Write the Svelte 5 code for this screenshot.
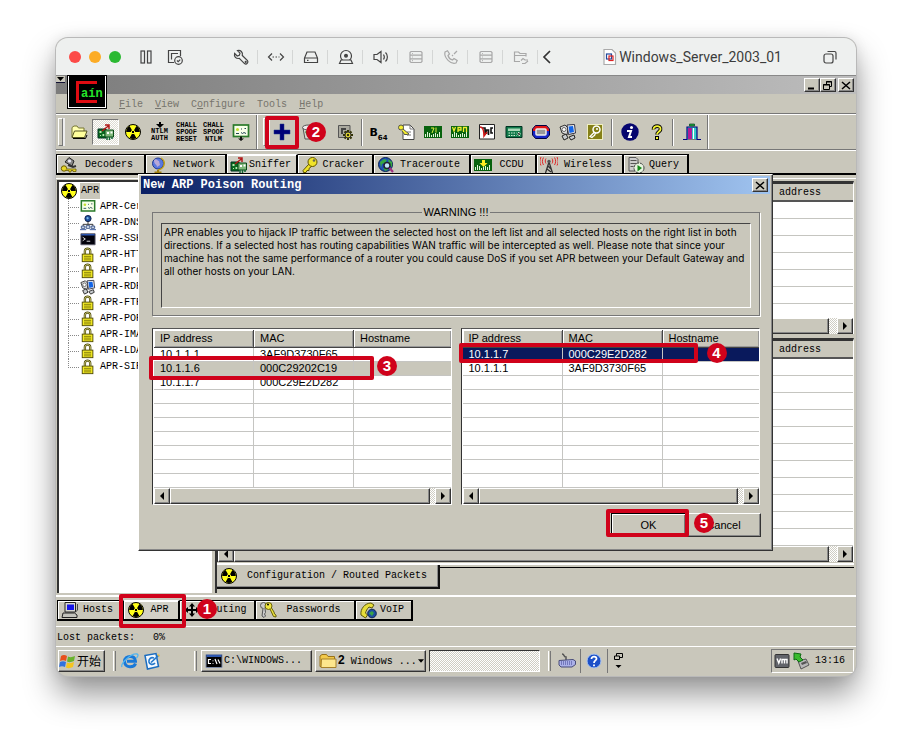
<script>
  const toolsLeft = ['folder', 'sniffer', 'nuke', 'ntlm', 'chall', 'challntlm', 'cert'];
  const toolsRight = ['b64', 'keydoc', 'hash', 'vpn', 'nc', 'calc', 'router', 'rdp', 'olive'];
  const tabs = [
    ['Decoders', 'decoder', 90],
    ['Network', 'globe', 81],
    ['Sniffer', 'sniffer', 71],
    ['Cracker', 'key', 76],
    ['Traceroute', 'earth', 97],
    ['CCDU', 'ccdu', 66],
    ['Wireless', 'wireless', 87],
    ['Query', 'query', 65]
  ];
  const tree = [
    ['APR-Cert', 'certs'], ['APR-DNS', 'dns'], ['APR-SSH-1', 'term'], ['APR-HTTPS', 'lock'],
    ['APR-Proxy', 'lock'], ['APR-RDP', 'rdp'], ['APR-FTPS', 'lock'], ['APR-POP3S', 'lock'],
    ['APR-IMAPS', 'lock'], ['APR-LDAPS', 'lock'], ['APR-SIPS', 'lock']
  ];
  const lists = [
    { id: 'left', selected: 1, rows: [['10.1.1.1', '3AF9D3730F65'], ['10.1.1.6', '000C29202C19'], ['10.1.1.7', '000C29E2D282']] },
    { id: 'right', selected: 0, rows: [['10.1.1.7', '000C29E2D282'], ['10.1.1.1', '3AF9D3730F65']] }
  ];
  const macTools = ['wrench', 'net', 'disk', 'cam', 'speaker', 'drive', 'phone', 'drive', 'share'];
</script>

{#snippet mac(name)}
  <svg width="18" height="18" viewBox="0 0 18 18" fill="none" stroke="currentColor" stroke-width="1.2">
    {#if name === 'pause'}<rect x="4" y="3" width="3.5" height="12" /><rect x="10.5" y="3" width="3.5" height="12" />
    {:else if name === 'snap'}<path d="M8 14.500H2.500V2.500H14.500V8M5.500 11.500V5.500H12" /><circle cx="12.500" cy="12.500" r="3.800" /><path d="M11 12.500l1.200 1.200 2-2" />
    {:else if name === 'wrench'}<path d="M5.500 2.600 8 5.200 7.300 7.300 5.200 8 2.600 5.500C1.800 8.500 4 11 7.300 10.400L12.500 15.600C14.500 17 16.800 14.600 15.500 12.700L10.300 7.500C11.200 4.200 8.500 1.800 5.500 2.600Z" /><circle cx="13.700" cy="13.900" r=".5" />
    {:else if name === 'net'}<path d="M5 5.500 1.500 9 5 12.500M13 5.500 16.500 9 13 12.500" /><path d="M5.500 9h7" stroke-dasharray="1.500 1.500" />
    {:else if name === 'disk'}<path d="M5 4H13L15.500 10V14.500H2.500V10ZM2.500 10H15.500M5 12.400h1.500" />
    {:else if name === 'cam'}<circle cx="9" cy="8" r="5.500" /><circle cx="9" cy="7.800" r="1.400" fill="currentColor" /><path d="M4 12H14L15.500 15.500H2.500Z" fill="#eef0ef" />
    {:else if name === 'speaker'}<path d="M2 6.500H5L9 3.500V14.500L5 11.500H2ZM11.500 6.500C12.500 8 12.500 10 11.500 11.500M13.500 4.500C16 7 16 11 13.500 13.500" />
    {:else if name === 'drive'}<path d="M4 3.500H14L15 4.500V13.500L14 14.500H4L3 13.500V4.500ZM3 7.200H15M3 10.900H15M5 5.500h.8M5 9h.8M5 12.700h.8" />
    {:else if name === 'phone'}<path d="M3 4 5.500 2.800 7.500 6 6 7.500C6.500 9.500 8.500 11.500 10.500 12L12 10.500 15.200 12.500 14 15C9 17 1.500 9.500 3 4ZM10 8l1-1M12 6l3-3" />
    {:else if name === 'share'}<path d="M8 13.500H2.500V4H6.500L8 5.500H14V8.500M2.500 7.500H14M9 12.500l2-2 2 1.500h3M10 15.500h3l3-2.500" />
    {:else if name === 'back'}<path d="M12 3 6 9 12 15" stroke-width="1.700" />
    {:else if name === 'windows'}<rect x="3" y="6" width="9" height="9" rx="2" /><path d="M6.500 3.500H13.500Q15 3.500 15 5V11.500" />
    {:else}<path d="M3 1.500H11L14.500 5V16.500H3Z" fill="#fff" stroke="#aaa" /><rect x="5.500" y="6" width="5" height="5" stroke="#22479a" /><rect x="8" y="8" width="4" height="4.500" stroke="#d22" />{/if}
  </svg>
{/snippet}

{#snippet nuke()}
  <circle cx="9" cy="9" r="7.500" fill="#ffff1a" stroke="#000" />
  <path d="M9 9H2.200A6.800 6.800 0 0 1 5.600 3.100ZM9 9 12.400 3.100A6.800 6.800 0 0 1 15.800 9ZM9 9 12.400 14.900A6.800 6.800 0 0 1 5.600 14.900Z" fill="#000" />
  <circle cx="9" cy="9" r="1.700" fill="#000" stroke="#ffff1a" />
{/snippet}

{#snippet icon(name)}
  {#if name === 'ntlm'}
    <span class="tiny"><svg width="8" height="6" viewBox="0 0 8 6"><path d="M3 0H5V2H8L4 6 0 2H3Z" /></svg>NTLM<br />AUTH</span>
  {:else if name === 'chall'}<span class="tiny">CHALL<br />SPOOF<br />RESET</span>
  {:else if name === 'challntlm'}<span class="tiny">CHALL<br />SPOOF<br />NTLM</span>
  {:else if name === 'b64'}<span class="b64"><b>B</b><small>64</small></span>
  {:else}
    <svg class="ico" width="18" height="18" viewBox="0 0 18 18">
      {#if name === 'folder'}<path d="M2 14V4.500L4 3H7L8.500 5H14V8" fill="#ffffb0" stroke="#777733" /><path d="M4.500 8H17L14.500 14.500H2Z" fill="#ffff9c" stroke="#555522" /><path d="M3 15.500H15.500L17 12" fill="none" stroke="#000" />
      {:else if name === 'sniffer'}<path d="M1 6H9V15H1Z" fill="#0b6b20" stroke="#032" /><path d="M2.500 8h2v2h-2zM5.500 11h2v2h-2zM3 12h1v1H3z" fill="#b8e8b0" /><path d="M8 7H16.500V14H8Z" fill="#7fb87a" stroke="#0a4a18" /><path d="M10 9h2v2h-2zM13.500 8.500h2v2h-2z" fill="#fff" /><path d="M10 14v3M12.500 14v3M15 14v2" stroke="#163" stroke-width="1.500" /><path d="M5 8 12 2.500M12 6V2H8" stroke="#b01818" stroke-width="1.500" fill="none" />
      {:else if name === 'nuke'}{@render nuke()}
      {:else if name === 'cert' || name === 'certs'}<rect x="1.500" y="2" width="15" height="11.500" fill="#f7ffe8" stroke="#2a7a2a" stroke-width="1.700" /><path d="M4 10.500h3M9 9.500l1.500 1 1.500-1 2 1M9 6h1M12.500 5.500h1.500" stroke="#245" fill="none" /><circle cx="5.500" cy="6.500" r="1.500" fill="#c4dd30" />{#if name === 'cert'}<path d="M8 13.500h2v2h2l-3 2.500-3-2.500h2z" fill="#111" />{/if}
      {:else if name === 'plus'}<path d="M7 1h4v6h6v4h-6v6H7v-6H1V7h6z" fill="#000078" stroke="#223a88" stroke-width=".5" />
      {:else if name === 'trash'}<path d="M3 5H14L12.500 16H5Z" fill="#d8d8d0" stroke="#555" /><ellipse cx="8.500" cy="4.500" rx="6" ry="2.500" fill="#eee" stroke="#555" /><path d="M6 9l3-2 2 3-3 3z" fill="none" stroke="#208020" stroke-width="1.500" />
      {:else if name === 'config'}<path d="M2.500 2.500H14V14.500H2.500Z" fill="#aaa99f" stroke="#555" /><path d="M5 5h5v2H7v4H5zM9 8h2v3H9z" fill="#444" /><path d="M12 7v10M7 12h10M8.500 8.500l7 7M15.500 8.500l-7 7" stroke="#303000" stroke-width="2" /><circle cx="12" cy="12" r="3" fill="#d8cd30" stroke="#333" /><circle cx="12" cy="12" r="1" />
      {:else if name === 'keydoc'}<path d="M6 2H13L17 6V16.500H6Z" fill="#fff" stroke="#444" /><path d="M13 2V6H17M10 9h4M10 12h4" fill="none" stroke="#777" /><circle cx="4" cy="4.500" r="2.500" fill="#f5ee30" stroke="#554" /><path d="m6 6 6 5-2 1-1-1-1 1-3-4" fill="#f5ee30" stroke="#554" />
      {:else if name === 'hash' || name === 'vpn' || name === 'ccdu'}<path d="M0 3H18V15H0Z" fill="#08620e" /><path d="M1.500 14v-3M3.500 14v-5M5.500 14v-4M7.500 14v-2M9.500 14v-3M11.500 14v-4M13.500 14v-3M15.500 14v-5" stroke="#dff5d8" />
        {#if name === 'hash'}<path d="M7 5h3l-2 5M12 4.500v5" fill="none" stroke="#dcef40" />{:else if name === 'vpn'}<path d="M1.500 4l1.500 4 1.500-4M7 9V4.500h3v2.500H7M12.500 9V4.500h3V9" fill="none" stroke="#f0f030" stroke-width="1.300" />{:else}<path d="M8 4h3v3h2.500L9.500 11 5.500 7H8z" fill="#ffee20" />{/if}
      {:else if name === 'nc'}<path d="M1.500 1.500H16.500V16H1.500Z" fill="#fff" stroke="#222" /><path d="M4 5h3v7M8.500 11V7h2v5M15 5h-2v5h2" stroke="#111" stroke-width="1.600" fill="none" /><path d="M2 4c3 0 4 4 4 9l3-4" stroke="#d01818" fill="none" stroke-width="1.500" />
      {:else if name === 'calc'}<path d="M1 3.500H17V14.500H1Z" fill="#117a4a" stroke="#032" /><path d="M3 5.500H15V8H3Z" fill="#a9d8b8" /><path d="M3.500 10h8M3.500 12.500h8M13 9.500h2v3h-2z" stroke="#d4ecd6" stroke-dasharray="1.500 1" />
      {:else if name === 'router'}<path d="M3.500 2.500H14.500L17.500 6V12L14.500 15.500H3.500L.500 12V6Z" fill="#1626c8" stroke="#000040" /><path d="M3.500 3H14.500L17 6V8H1V6Z" fill="#e01515" /><rect x="4" y="6" width="10" height="6" rx="1" fill="#999" stroke="#eee" stroke-width="1.500" />
      {:else if name === 'rdp'}<path d="M1 4 6 2 9 5 8 12 3 10Z" fill="#ddd" stroke="#333" /><path d="M8 2 15.500 1.500 16.500 10 9.500 11.500Z" fill="#efefef" stroke="#334" /><path d="M9.500 3.500 14 3 15 9 10.500 10Z" fill="#1265e8" /><path d="M3 13l4-2 2 4-4 2zM10 14l5-2 1 3-4 2z" fill="#c8ccd0" stroke="#222" /><circle cx="5" cy="6.500" r="2" fill="#fff" stroke="#666" />
      {:else if name === 'olive'}<rect x="1.500" y="1.500" width="15" height="15" fill="#858017" stroke="#eeeec0" /><circle cx="10.500" cy="6.500" r="3.500" fill="#858017" stroke="#fff" stroke-width="1.500" /><path d="M8.500 9 4 13.500l2 1 1.500-1.500 1-.500L9.500 10" fill="none" stroke="#fff" stroke-width="1.300" /><circle cx="11" cy="6" r="1" fill="#fff" />
      {:else if name === 'info'}<circle cx="9" cy="9" r="8.700" fill="#05056f" /><path d="M6 8h4l-2 6h3" fill="none" stroke="#fff" stroke-width="2" /><circle cx="10.500" cy="4.500" r="1.500" fill="#fff" />
      {:else if name === 'help'}<path d="M5.500 6.500C5 2 13.500 2 12.500 6.500 12 9 9 8.500 9 11.500" fill="none" stroke="#000" stroke-width="3.600" /><path d="M5.500 6.500C5 2 13.500 2 12.500 6.500 12 9 9 8.500 9 11.500" fill="none" stroke="#f3f330" stroke-width="1.800" /><rect x="7.500" y="13.500" width="3" height="3" fill="#f3f330" stroke="#000" />
      {:else if name === 'door'}<path d="M0 16.500H4V4H14V16.500H18" fill="#35c8c8" stroke="#000080" stroke-width="1.200" /><path d="M5 5h4v11H5z" fill="#b01898" /><path d="M10 5h1v11h-1z" fill="#fff" /><path d="M6.500 1h5v2h-5z" fill="#20a838" stroke="#042" stroke-width=".7" /><path d="M5 16.500h8" stroke="#777" />
      {:else if name === 'decoder'}<path d="M5 6 9 1.500 14 5 12 10Z" fill="#888" stroke="#222" /><circle cx="9.500" cy="5" r="1.600" fill="#e8e8f8" /><path d="m8 9 5 2 3-1" fill="none" stroke="#333" stroke-width="2" /><circle cx="4" cy="12.500" r="2.700" fill="#e8d82a" stroke="#6b5c00" /><path d="M6.500 13H16v2.500H13V14.500H11V16H9V14.500H6" fill="#e8d82a" stroke="#6b5c00" stroke-width=".8" />
      {:else if name === 'globe'}<circle cx="9" cy="7.500" r="5.500" fill="#5878e0" stroke="#223a90" /><path d="M5 4c3-2 3 1 5 1l1 4-3 2c0-3-3-2-3-7z" fill="#b8a8d8" /><path d="M12 2C18 6 15 13 9 14" fill="none" stroke="#c0a018" stroke-width="1.500" /><path d="M9 14v2M5.500 16.500h7" stroke="#a08010" stroke-width="2" />
      {:else if name === 'key'}<path d="m8 8-6 6.500.5 2H5l1-2h2v-2l3-2.500" fill="#f0e32a" stroke="#5e5200" /><circle cx="11.500" cy="6" r="4.500" fill="#f0e32a" stroke="#5e5200" /><circle cx="13" cy="4.500" r="1.300" fill="#665" />
      {:else if name === 'earth'}<circle cx="8.500" cy="8.500" r="7" fill="#1d4fb8" stroke="#0b2450" /><path d="M3 6l4-3 3 1-2 3-3 1-1 4zM11 3l4 3 0 5-3-2zM6 12l5 0 0 2-3 1z" fill="#36a843" /><circle cx="10" cy="9.500" r="3" fill="#bfe6f8" stroke="#223" stroke-width="1.500" /><path d="m12.500 12 3.500 4" stroke="#a03080" stroke-width="2.200" />
      {:else if name === 'wireless'}<path d="M5.500 17 9 6 12.500 17M7 13 11 16M8 10l3 3" fill="none" stroke="#333" stroke-width="1.300" /><circle cx="9" cy="5.500" r="1.700" fill="#555" /><path d="M6 2.500C5 4 5 6 6 7.500M3.500 1.500C2 4 2 6.500 3.500 9M1 1C-.500 4-.500 7 1 9.500M12 2.500C13 4 13 6 12 7.500M14.500 1.500C16 4 16 6.500 14.500 9M17 1C18.500 4 18.500 7 17 9.500" fill="none" stroke="#e02828" />
      {:else if name === 'query'}<path d="M2 1.500H9L11 3.500V15H2Z" fill="#ccc" stroke="#555" /><path d="M3.500 4.500h6M3.500 7.500h6M3.500 10.500h3" stroke="#555" /><circle cx="12" cy="12" r="5" fill="#e8f5e0" stroke="#444" stroke-dasharray="3 1" /><path d="M10.500 9 15 12l-4.500 3.500z" fill="#178a1c" />
      {:else if name === 'dns'}<circle cx="9" cy="4" r="3.500" fill="#1b4f9c" stroke="#0a1c48" /><path d="M7 3l2-1 1 2-2 1z" fill="#7db8e8" /><path d="M9 7.500V10.500M3.500 13V10.500H14.500V13" fill="none" stroke="#222" /><path d="M1.500 12.500h4v2.500h-4zM12.500 12.500h4v2.500h-4zM7 12h4v3H7z" fill="#e0e8f4" stroke="#2e4a80" /><path d="M0 16.500h7M11 16.500h7" stroke="#2a4a94" />
      {:else if name === 'term'}<path d="M1 3H17V15.500H1Z" fill="#02020c" stroke="#667" /><path d="M1.500 3.500H16.500V5H1.500Z" fill="#2a55b0" /><path d="m3 7 3 2-3 2M7.500 11.500h4" fill="none" stroke="#eee" />
      {:else if name === 'lock'}<path d="M5.500 8V4.500C5.500 1 11.500 1 11.500 4.500V8" fill="none" stroke="#4c4700" stroke-width="2.600" /><path d="M5.500 8V4.500C5.500 1 11.500 1 11.500 4.500V8" fill="none" stroke="#d8d890" /><rect x="2.500" y="8" width="12" height="8.500" fill="#f4ec24" stroke="#4c4700" /><path d="M4.500 10.500h8M4.500 12.500h8M4.500 14.500h8" stroke="#7d7608" />
      {:else if name === 'pc'}<path d="M4 1.500H14.500V11H4Z" fill="#d8d8d0" stroke="#222" /><path d="M6 3.500h7v5.500H6z" fill="#1515e8" /><path d="M2 12H13.500L16 14V16.500H1Z" fill="#c4c4bc" stroke="#222" /><path d="M14.500 11 16.500 9V3" fill="none" stroke="#444" />
      {:else if name === 'cross'}<path d="M9 2l3 3.500H10V8h3V6l3.500 3-3.500 3v-2h-3v2.500h2L9 16l-3-3.500H8V10H5v2L1.500 9 5 6v2h3V5.500H6z" fill="#000" />
      {:else if name === 'keys'}<circle cx="4.500" cy="4.500" r="3" fill="#ccc" stroke="#555" /><path d="M4 7.500 3 15l2 1.500 1.500-1.500-1-2 1-1.500-.500-4" fill="#ccc" stroke="#555" /><circle cx="9.500" cy="5" r="3.500" fill="#efe640" stroke="#66600a" /><path d="m11 8 3.500 7.500 2.500.5V14l-1.500-1L15 11l-2.500-4" fill="#efe640" stroke="#66600a" /><circle cx="9" cy="3.500" r="1" />
      {:else if name === 'voip'}<path d="M2 14C1 8 6 2 12 2l3 2-2 3-3-1C8 8 7 10 6.500 12l2 2-2 3z" fill="#e6dd3a" stroke="#5b560a" /><circle cx="13" cy="12.500" r="4.300" fill="#1e4da0" stroke="#0b2450" /><path d="M10 12l3-2 2 2-2 3z" fill="#39a348" />
      {:else if name === 'flag'}<path d="M2 4Q5 2 8 4L7 9Q4 7.500 1 9Z" fill="#e8501c" /><path d="M9 4.500Q12 6 16 4L15 9Q11 11 8 9.500Z" fill="#68b32c" /><path d="M1 10Q4 8.500 7 10L6 15Q3 13.500 0 15Z" fill="#3172e0" /><path d="M8 10.500Q11 12 15 10L14 15Q10 17 7 15.500Z" fill="#f5c520" />
      {:else if name === 'ie'}<path d="M14.500 11.500C13 16 4 16.500 3.500 9.500 3.500 3 14.500 2.500 14.500 9.300H6" fill="none" stroke="#1979d8" stroke-width="3" /><path d="M1 15C-1 12 10 1 16 2 18 2.500 16.500 5 15.500 6" fill="none" stroke="#52b5f0" stroke-width="1.300" />
      {:else if name === 'desk'}<path d="M2 3.500 13 1.500 15.500 14.500 4.500 17Z" fill="#f5faff" stroke="#1b6dc0" stroke-width="1.500" /><path d="M11 6C8 4.500 5.500 7 6 10c.500 2.500 4 3.500 6 1M8 10.500 15.500 3.500" fill="none" stroke="#2579cc" stroke-width="1.700" /><path d="m14 2 3 1-1 2z" fill="#e2b53c" />
      {:else if name === 'cmd'}<path d="M1 2.500H17V15.500H1Z" fill="#000" stroke="#7d8ba8" /><path d="M1.500 3H16.500V5H1.500Z" fill="#2c56ae" /><path d="M6 7.500H3.500v4H6M8 8.500v.8M8 11v.8M10 7l2 5M13 7.500l2 4" fill="none" stroke="#fff" stroke-width="1.200" />
      {:else if name === 'wfolder'}<path d="M1 14.500V4L3 2.500H7.500L9 4.500H15.500V14.500Z" fill="#f2c94a" stroke="#99721a" /><path d="M2.500 7H17V15.500H2Z" fill="#fde68c" stroke="#a6802a" />
      {:else if name === 'kbd'}<path d="M4 2c3 0 1 3 4 3v3" fill="none" stroke="#555" stroke-width="1.500" /><path d="M1 8.500 15 7.500 17.500 9v3.500L14 15H3L1 13Z" fill="#aab0e8" stroke="#484c78" /><path d="M3 10h12M3 12h12" stroke="#3c4090" stroke-dasharray="1 1" />
      {:else if name === 'qhelp'}<circle cx="9" cy="9" r="7" fill="#1c50c8" stroke="#a9c4f0" /><path d="M6.500 7C6.500 3.500 12 4 11.500 7 11.300 8.500 9 8.500 9 11M9 12.500v1.700" fill="none" stroke="#fff" stroke-width="1.800" />
      {:else if name === 'vm'}<rect x="2" y="2.500" width="14" height="13" rx="1" fill="#62646a" stroke="#333" /><path d="m4 6.500 1.800 4.500 1.800-4.500M9 11.500V7.500h2.500v4M11.500 7.500h2.500v4" fill="none" stroke="#fff" stroke-width="1.400" />
      {:else if name === 'eject'}<path d="m6 9 8-2 3 6-8 4z" fill="#b8b8b8" stroke="#555" /><path d="m9 11 5-2 1 2-5 2z" fill="#555" /><path d="M2 1 9 2 8 5l3 3-4 2-3-3-2 1z" fill="#3bbb2e" stroke="#0f6a14" />
      {/if}
    </svg>
  {/if}
{/snippet}

{#snippet mark(n, kind)}
  <span class="frame {kind}"></span><span class="badge {kind}">{n}</span>
{/snippet}

{#snippet scroll()}
  <div class="scroll">
    <button aria-label="Scroll left"><svg width="4" height="8" viewBox="0 0 4 8"><path d="M4 0V8L0 4Z" /></svg></button>
    <div class="thumb"></div>
    <button aria-label="Scroll right"><svg width="4" height="8" viewBox="0 0 4 8"><path d="M0 0V8L4 4Z" /></svg></button>
  </div>
{/snippet}

<main class="window">
  <header class="mac">
    <div class="lights"><i class="red"></i><i class="amber"></i><i class="green"></i></div>
    <button aria-label="Pause">{@render mac('pause')}</button>
    <button aria-label="Snapshots">{@render mac('snap')}</button>
    <div class="mactools">
      {#each macTools as t, i}
        <button aria-label={t} class:dim={i > 4}>{@render mac(t)}</button>
      {/each}
    </div>
    <button class="back" aria-label="Collapse">{@render mac('back')}</button>
    <h1>{@render mac('doc')}Windows_Server_2003_01</h1>
    <button class="multi" aria-label="Unity">{@render mac('windows')}</button>
  </header>

  <div class="caption">
    <span class="sys"><svg width="7" height="4" viewBox="0 0 7 4"><path d="M0 0H7L3.500 4Z" /></svg></span>
    <span class="logo">
      <svg width="38" height="32" viewBox="0 0 38 32"><path d="M28 6.500H8.500V25.500H28" fill="none" stroke="#e00c12" stroke-width="3" /></svg>
      <em>aín</em>
    </span>
    <div class="ctl">
      <button aria-label="Minimize"><svg width="10" height="9" viewBox="0 0 10 9"><path d="M1 7.500H7" stroke="#000" stroke-width="2" /></svg></button>
      <button aria-label="Restore"><svg width="10" height="9" viewBox="0 0 10 9" fill="none" stroke="#000"><path d="M3.500 3V.500H8.500V5.500H7M3 1H9M.500 3.500H6.500V8.500H.500ZM0 4H7" /></svg></button>
      <button class="x" aria-label="Close"><svg width="10" height="9" viewBox="0 0 10 9"><path d="m1 1 8 7M9 1 1 8" stroke="#000" stroke-width="1.500" /></svg></button>
    </div>
  </div>

  <nav class="menu">
    <a href="#file"><u>F</u>ile</a><a href="#view"><u>V</u>iew</a><a href="#configure">C<u>o</u>nfigure</a><a href="#tools">Tools</a><a href="#help"><u>H</u>elp</a>
  </nav>

  <div class="toolbar">
    <span class="grip"></span>
    {#each toolsLeft as t}
      <button class="tool" class:pressed={t === 'sniffer'} aria-label={t}>{@render icon(t)}</button>
    {/each}
    <span class="etch full"></span><span class="grip second"></span>
    <span class="anchor"><button class="tool" aria-label="Add">{@render icon('plus')}</button>{@render mark(2, 'm2')}</span>
    <button class="tool" aria-label="Remove">{@render icon('trash')}</button>
    <button class="tool conf" aria-label="Configure">{@render icon('config')}</button>
    <span class="etch"></span>
    {#each toolsRight as t}
      <button class="tool" aria-label={t}>{@render icon(t)}</button>
    {/each}
    <span class="etch wide"></span>
    <button class="tool" aria-label="About">{@render icon('info')}</button>
    <button class="tool" aria-label="Help">{@render icon('help')}</button>
    <span class="etch"></span>
    <button class="tool exit" aria-label="Exit">{@render icon('door')}</button>
    <span class="etch full"></span>
  </div>

  <div class="tabs top">
    {#each tabs as [label, ic, w]}
      <button class="tab" class:on={label === 'Sniffer'} style="width:{w}px">{@render icon(ic)}<span>{label}</span></button>
    {/each}
  </div>

  <section class="work">
    <div class="tree">
      <div class="root">{@render icon('nuke')}<span>APR</span></div>
      <ul>
        {#each tree as [label, ic]}
          <li>{@render icon(ic)}<span>{label}</span></li>
        {/each}
      </ul>
    </div>
    <div class="pane">
      <div class="grid first">
        <table><thead><tr><th class="wide"></th><th>IP address</th></tr></thead></table>
        <div class="rules"></div>
        {@render scroll()}
      </div>
      <div class="grid next">
        <table><thead><tr><th class="wide"></th><th>IP address</th></tr></thead></table>
        <div class="rules"></div>
        {@render scroll()}
      </div>
      <div class="sheet"><button class="sheettab">{@render icon('nuke')}<span>Configuration / Routed Packets</span></button></div>
    </div>

    <div class="dialog" role="dialog" aria-label="New ARP Poison Routing">
      <div class="dtitle">
        <h2>New ARP Poison Routing</h2>
        <button aria-label="Close dialog"><svg width="10" height="9" viewBox="0 0 10 9"><path d="m1 1 8 7M9 1 1 8" stroke="#000" stroke-width="1.500" /></svg></button>
      </div>
      <fieldset>
        <legend>WARNING !!!</legend>
        <p>APR enables you to hijack IP traffic between the selected host on the left list and all selected hosts on the right list in both<br />directions. If a selected host has routing capabilities WAN traffic will be intercepted as well. Please note that since your<br />machine has not the same performance of a router you could cause DoS if you set APR between your Default Gateway and<br />all other hosts on your LAN.</p>
      </fieldset>
      <div class="lists">
        {#each lists as list}
          <div class="list {list.id}">
            <table>
              <thead><tr><th>IP address</th><th>MAC</th><th class="rest">Hostname</th></tr></thead>
              <tbody>
                {#each Array(10) as _, i}
                  <tr class:sel={i === list.selected}><td>{list.rows[i]?.[0] ?? ''}</td><td>{list.rows[i]?.[1] ?? ''}</td><td></td></tr>
                {/each}
              </tbody>
            </table>
            {@render scroll()}
            {#if list.id === 'left'}{@render mark(3, 'm3')}{:else}{@render mark(4, 'm4')}{/if}
          </div>
        {/each}
      </div>
      <div class="actions">
        <span class="anchor"><button class="push ok">OK</button>{@render mark(5, 'm5')}</span>
        <button class="push">Cancel</button>
      </div>
    </div>
  </section>

  <div class="tabs bottom">
    <button class="tab" style="width:66px">{@render icon('pc')}<span>Hosts</span></button>
    <span class="anchor"><button class="tab on" style="width:57px">{@render icon('nuke')}<span>APR</span></button>{@render mark(1, 'm1')}</span>
    <button class="tab" style="width:76px">{@render icon('cross')}<span>Routing</span></button>
    <button class="tab" style="width:100px">{@render icon('keys')}<span>Passwords</span></button>
    <button class="tab" style="width:57px">{@render icon('voip')}<span>VoIP</span></button>
  </div>
  <div class="status"><span>Lost packets:</span><span>0%</span></div>

  <footer class="taskbar">
    <button class="start">{@render icon('flag')}开始</button>
    <span class="bar"></span>
    <button class="quick" aria-label="Internet Explorer">{@render icon('ie')}</button>
    <button class="quick" aria-label="Show desktop">{@render icon('desk')}</button>
    <span class="bar far"></span>
    <button class="task">{@render icon('cmd')}<span>C:\WINDOWS...</span></button>
    <button class="task">{@render icon('wfolder')}<span><b>2</b> Windows ...</span><svg width="6" height="4" viewBox="0 0 7 4"><path d="M0 0H7L3.500 4Z" /></svg></button>
    <span class="slot"></span>
    <span class="bar"></span>
    <button class="quick k" aria-label="Keyboard">{@render icon('kbd')}</button>
    <button class="quick k" aria-label="Help">{@render icon('qhelp')}</button>
    <span class="lang"><svg width="9" height="16" viewBox="0 0 9 16" fill="none" stroke="#000"><path d="M2.500 3V.500H8.500V4.500H6M.500 3H5.500V6.500H.500Z" /><path d="M1.500 12H7.500L4.500 15Z" fill="#000" stroke="none" /></svg></span>
    <div class="tray">{@render icon('vm')}{@render icon('eject')}<time>13:16</time></div>
  </footer>
</main>

<style>
  :global(body) { margin: 0; background: #fff; }
  * { box-sizing: border-box; }
  .window {
    --face: #c9c7bb;
    --mono: "Liberation Mono", "Noto Sans CJK SC", monospace;
    --sans: "Liberation Sans", Arial, sans-serif;
    margin: 38px 56px 74px;
    border-radius: 12px;
    overflow: clip;
    background: var(--face);
    color: #000;
    font: 10px/16px var(--mono);
    box-shadow: 0 0 0 1px #b9b9b9, 0 18px 32px rgba(0, 0, 0, .42), 0 0 14px rgba(0, 0, 0, .1);
  }
  button { font: inherit; color: inherit; margin: 0; padding: 0; border: 0; background: none; border-radius: 0; flex: none; }
  svg { display: block; flex: none; }
  .ico { width: 18px; height: 18px; }
  .anchor { position: relative; display: flex; flex: none; }

  .mac { display: flex; align-items: center; height: 38px; background: #eef0ef; border-bottom: 1px solid #888; color: #444; }
  .lights { display: flex; gap: 8px; margin: 0 10px 0 13px; }
  .lights i { width: 12px; height: 12px; border-radius: 50%; }
  .red { background: #fc4a47; }
  .amber { background: #fcac25; }
  .green { background: #2bb932; }
  .mac > button { width: 29px; display: grid; place-items: center; }
  .mactools { display: flex; margin-left: 34px; }
  .mactools button { width: 35px; height: 18px; display: grid; place-items: center; background: linear-gradient(#d4d6d5, #d4d6d5) right center / 1px 14px no-repeat; }
  .mactools .dim { color: #a8a8a8; }
  .mac > .back { width: 14px; color: #333; }
  .mac h1 { display: flex; align-items: center; margin: 0 0 0 auto; font: 14px/18px Roboto, sans-serif; color: #3c3c3c; }
  .mac > .multi { width: 18px; margin: 0 17px 0 39px; }

  .caption { position: relative; display: flex; align-items: center; height: 18px; background: linear-gradient(90deg, #7c7c7c, #bdbdbd); }
  .sys { align-self: flex-start; width: 9px; height: 7px; display: grid; place-items: center; background: var(--face); border-bottom: 1px solid #113; }
  .logo { position: absolute; z-index: 2; left: 12px; top: 0; width: 38px; height: 32px; background: #000; border: 1px solid #fff; border-top: 0; outline: 1px solid #000; }
  .logo em { position: absolute; left: 12px; top: 10px; font: bold 12px/16px "Liberation Mono", monospace; color: #25e62b; }
  .ctl { display: flex; margin: 0 2px 0 auto; }
  .ctl button, .dtitle button { width: 16px; height: 14px; display: grid; place-items: center; background: var(--face); border: 1px solid; border-color: #fff #333 #333 #fff; box-shadow: inset -1px -1px #888; }
  .ctl .x { margin-left: 2px; }

  .menu { display: flex; gap: 12px; height: 20px; padding: 2px 0 0 63px; border-bottom: 1px solid #777; }
  .menu a { color: #77756d; text-decoration: none; line-height: 17px; }

  .toolbar { display: flex; align-items: center; height: 36px; border-top: 1px solid #fff; border-bottom: 1px solid #777; box-shadow: 0 1px #fff; }
  .tool { width: 27px; height: 26px; display: grid; place-items: center; }
  .pressed { border: 1px solid; border-color: #777 #fff #fff #777; background: repeating-conic-gradient(#fff 0 25%, #dddbd2 0 50%) 0 0 / 2px 2px; }
  .grip { width: 5px; height: 28px; margin: 0 2px; border: 1px solid; border-color: #fff #777 #777 #fff; box-shadow: 2px 0 #eee; flex: none; }
  .grip.second { margin: 0 0 0 3px; }
  .etch { width: 2px; height: 27px; border-left: 1px solid #777; border-right: 1px solid #fff; margin: 0 2px; flex: none; }
  .etch.wide { margin: 0 3px; }
  .etch.full { height: 34px; }
  .conf { margin: 0 1px 0 9px; }
  .exit { margin-left: 2px; }
  .tiny { font: bold 7px/7px "Liberation Mono", monospace; display: block; text-align: center; }
  .tiny svg { margin: 0 auto; }
  .b64 { display: flex; align-items: flex-end; }
  .b64 b { font: bold 11px/18px "DejaVu Sans", sans-serif; }
  .b64 small { font: bold 7px/8px "DejaVu Sans", sans-serif; margin-top: 12px; }

  .tabs { display: flex; }
  .tabs.top { padding-top: 4px; height: 23px; }
  .tab { display: flex; align-items: center; height: 21px; border: solid #000; border-width: 1px 2px 1px 0; box-shadow: inset 1px 1px #fff; padding: 0 4px 0 3px; }
  .tab > span { flex: 1; text-align: center; }
  .tab:first-child { border-left-width: 1px; }
  .tab.on { border-top-color: #fff; background: #d2d0c6; }

  .work { position: relative; display: flex; height: 424px; padding: 5px 2px 2px 1px; border-top: 2px solid #000; box-shadow: inset 0 3px var(--face), inset 0 4px #fff; border-bottom: 2px solid #fff; }
  .tree { width: 155px; padding: 1px 0 0 1px; background: #fff; border: solid #333; border-width: 2px 0 0 2px; overflow: hidden; }
  .root { display: flex; align-items: center; gap: 2px; height: 16px; }
  .root span { padding: 0 1px; background: var(--face); }
  .tree ul { list-style: none; margin: 0; padding: 0 0 0 8px; }
  .tree li { position: relative; display: flex; align-items: center; gap: 4px; height: 16px; padding-left: 12px; white-space: nowrap; }
  .tree li :global(.ico) { width: 16px; height: 16px; }
  .tree li::before { content: ""; position: absolute; left: 0; top: 0; width: 10px; height: 8px; border: dotted #888; border-width: 0 0 1px 1px; }
  .tree li::after { content: ""; position: absolute; left: 0; top: 8px; bottom: 0; border-left: 1px dotted #888; }
  .tree li:last-child::after { display: none; }
  .pane { flex: 1; display: flex; flex-direction: column; margin: 1px 0 0 3px; border-left: 2px solid #333; min-width: 0; }
  .grid { display: flex; flex-direction: column; border: solid #333; border-width: 3px 1px 0 1px; border-right-color: #fff; background: #fff; }
  .grid.first { height: 153px; }
  .grid.next { height: 224px; margin-top: 4px; }
  .grid table { width: 100%; border-collapse: collapse; background: var(--face); flex: none; }
  .grid th { width: 92px; height: 17px; padding: 0; text-align: left; font-weight: normal; border-bottom: 2px solid #555; line-height: 15px; }
  .grid .wide { width: auto; }
  .rules { flex: 1; background: repeating-linear-gradient(#fff 0 16px, #c5c5c0 16px 17px); }
  .grid :global(.scroll) { flex: none; }
  .sheet { flex: 1; display: flex; margin-top: 1px; border-top: 2px solid #fff; box-shadow: inset 0 2px var(--face), inset 0 3px #000; }
  .sheettab { display: flex; align-items: center; gap: 9px; height: 24px; padding: 0 11px 0 3px; border: solid #111; border-width: 0 2px 2px 0; background: var(--face); box-shadow: inset -1px -1px #888; }

  .scroll { display: flex; height: 16px; background: repeating-conic-gradient(#fff 0 25%, #cfcdc3 0 50%) 0 0 / 2px 2px; }
  .scroll button, .thumb { border: 1px solid; border-color: #fff #333 #333 #fff; background: var(--face); box-shadow: inset -1px -1px #888; }
  .scroll button { width: 16px; display: grid; place-items: center; }
  .thumb { flex: 1; margin-right: 5px; }
  .grid .thumb { margin-right: 8px; }

  .dialog { position: absolute; z-index: 3; left: 82px; right: 83px; top: -1px; height: 377px; background: var(--face); border: 1px solid; border-color: #fff #333 #333 #fff; box-shadow: inset -1px -1px #888; font: 11px/13px var(--sans); padding: 1px 2px; }
  .dtitle { display: flex; align-items: center; height: 18px; padding: 0 2px; background: linear-gradient(90deg, #0a1f64, #a0c4f0); color: #fff; }
  .dtitle h2 { margin: 0; font: bold 12px/18px var(--mono); }
  .dtitle button { margin-left: auto; width: 16px; }
  fieldset { margin: 11px 10px 0 11px; padding: 4px 8px 8px; border: 1px solid #777; box-shadow: 1px 1px #fff, inset 0 0 #fff; height: 111px; min-width: 0; }
  legend { margin: 0 auto; padding: 0 2px; line-height: 14px; }
  fieldset p { margin: 0; height: 85px; padding: 2px 0 0 2px; border: 1px solid; border-color: #444 #fff #fff #444; font: 10px/13px Inter, "Liberation Sans", sans-serif; white-space: nowrap; }
  .lists { display: grid; grid-template-columns: 1fr 1fr; gap: 9px; margin: 12px 10px 0 11px; }
  .list { position: relative; border: 1px solid; border-color: #555 #fff #fff #333; padding: 1px 0 0 1px; background: #fff; }
  .list table { width: 100%; table-layout: fixed; border-collapse: separate; border-spacing: 0; }
  .list th { width: 100px; height: 18px; padding: 0 0 0 6px; text-align: left; font-weight: normal; background: var(--face); border: solid #444; border-width: 0 1px 1px 0; box-shadow: inset 1px 1px #fff, inset -1px -1px #999; line-height: 15px; }
  .list .rest { width: auto; border-right: 0; }
  .list td { height: 14px; padding: 0 0 0 6px; line-height: 13px; border: solid #c5c5c2; border-width: 0 1px 1px 0; white-space: nowrap; }
  .list td:last-child { border-right: 0; }
  .left .sel td { background: var(--face); }
  .right .sel td { background: #09195c; color: #fff; }
  .actions { display: flex; justify-content: flex-end; margin: 8px 9px 0 0; }
  .push { width: 75px; height: 24px; background: var(--face); border: 1px solid; border-color: #fff #333 #333 #fff; box-shadow: inset -1px -1px #888; }
  .ok { border-color: #000; box-shadow: inset 1px 1px #fff, inset -1px -1px #777; }

  .tabs.bottom { height: 30px; padding: 3px 0 0 1px; border-bottom: 1px solid #fff; }
  .bottom .tab { border-width: 1px 2px 2px 0; height: 21px; }
  .bottom .tab:first-child { border-left-width: 1px; }
  .status { display: flex; gap: 18px; height: 20px; padding: 3px 1px 0; border-bottom: 1px solid #fff; }

  .taskbar { display: flex; align-items: center; height: 29px; padding: 0 2px 1px; }
  .start, .task { display: flex; align-items: center; height: 22px; border: 1px solid; border-color: #fff #333 #333 #fff; box-shadow: inset -1px -1px #888; flex: none; }
  .start { width: 47px; font: 12px/16px "Noto Sans CJK SC", sans-serif; }
  .task { width: 111px; padding: 0 3px; gap: 1px; margin-right: 3px; white-space: nowrap; }
  .task svg:last-child { margin-left: auto; }
  .task b { font: bold 12px/16px var(--sans); }
  .bar { width: 3px; height: 20px; border-left: 1px solid #fff; border-right: 1px solid #777; margin: 0 3px 0 8px; flex: none; }
  .bar.far { margin: 0 4px 0 31px; }
  .quick { width: 22px; display: grid; place-items: center; }
  .quick.k { width: 27px; height: 24px; border-right: 1px solid #777; }
  .slot { width: 111px; height: 22px; border: 1px solid; border-color: #333 #fff #fff #333; background: repeating-conic-gradient(#fff 0 25%, #cfcdc3 0 50%) 0 0 / 2px 2px; flex: none; }
  .lang { margin-left: 6px; }
  .tray { display: flex; align-items: center; gap: 1px; margin-left: auto; width: 83px; height: 24px; padding-left: 1px; border: 1px solid; border-color: #777 #fff #fff #777; }
  .tray time { margin-left: 4px; }

  .frame { position: absolute; z-index: 4; border: 4px solid #d0021b; border-radius: 2px; pointer-events: none; }
  .badge { position: absolute; z-index: 5; width: 20px; height: 20px; border-radius: 50%; background: #d0021b; color: #fff; font: bold 15px/20px "Liberation Sans", sans-serif; text-align: center; }
  .frame.m1 { left: -4px; top: -6px; width: 67px; height: 34px; }
  .badge.m1 { left: 74px; top: -1px; }
  .frame.m2 { left: -3px; top: -3px; width: 34px; height: 33px; }
  .badge.m2 { left: 38px; top: 3px; }
  .frame.m3 { left: -4px; top: 27px; width: 225px; height: 24px; }
  .badge.m3 { left: 224px; top: 27px; }
  .frame.m4 { left: -3px; top: 14px; width: 239px; height: 20px; }
  .badge.m4 { left: 245px; top: 14px; }
  .frame.m5 { left: -5px; top: -4px; width: 83px; height: 28px; }
  .badge.m5 { left: 83px; top: 0; }
</style>
